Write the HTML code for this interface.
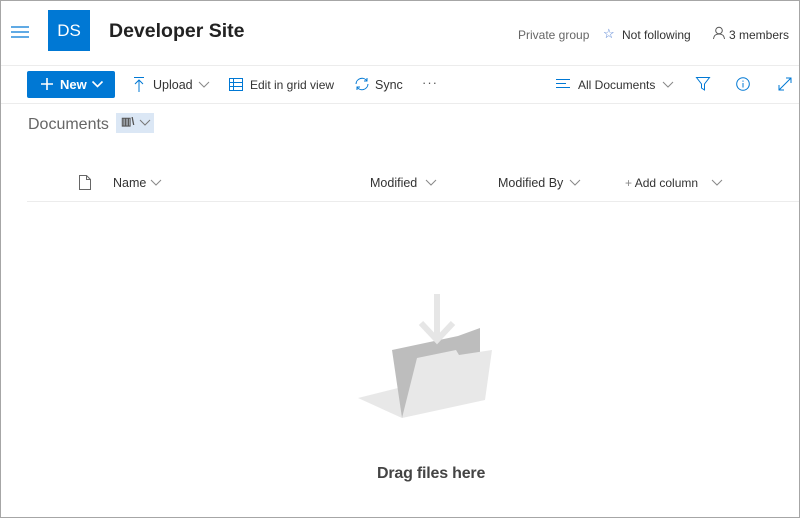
<!DOCTYPE html>
<html><head><meta charset="utf-8"><style>
*{margin:0;padding:0;box-sizing:border-box}
body{width:800px;height:518px;overflow:hidden;background:#fff;font-family:"Liberation Sans",sans-serif;position:relative;color:#333}
.frame{position:absolute;left:0;top:0;width:800px;height:518px;border:1px solid #a6a6a6;pointer-events:none}
.a{position:absolute;white-space:nowrap}
.hl{position:absolute;height:1px;background:#ececec}
svg{position:absolute;overflow:visible}
</style></head><body>
<svg style="left:11px;top:26px" width="20" height="12"><path d="M0 1H18M0 6H18M0 11H18" stroke="#0078d4" stroke-width="1.3" fill="none"/></svg>
<div class="a" style="left:48px;top:10px;width:42px;height:41px;background:#0078d4;color:#fff;font-size:17px;line-height:41px;text-align:center">DS</div>
<div class="a" style="left:109px;top:20px;font-size:19.5px;font-weight:bold;color:#222">Developer Site</div>
<div class="a" style="left:518px;top:28px;font-size:12px;color:#666">Private group</div>
<div class="a" style="left:603px;top:26px;font-size:13px;color:#4a7ad0">☆</div>
<div class="a" style="left:622px;top:28px;font-size:12px;color:#333">Not following</div>
<svg style="left:713px;top:27px" width="12" height="12"><circle cx="6" cy="3.5" r="3.3" stroke="#555" fill="none"/><path d="M0.5 12C1 8 3 7 6 7S11 8 11.5 12" stroke="#555" fill="none"/></svg>
<div class="a" style="left:729px;top:28px;font-size:12px;color:#333">3 members</div>
<div class="hl" style="left:1px;right:1px;top:65px"></div>
<div class="a" style="left:27px;top:71px;width:88px;height:27px;background:#0078d4;border-radius:2px"></div>
<svg style="left:41px;top:78px" width="12" height="12"><path d="M6 0V12M0 6H12" stroke="#fff" stroke-width="1.6"/></svg>
<div class="a" style="left:60px;top:77px;font-size:13px;font-weight:bold;color:#fff">New</div>
<svg style="left:92px;top:81px" width="11" height="7"><path d="M0.5 0.5L5.5 5.5L10.5 0.5" stroke="#fff" stroke-width="1.6" fill="none"/></svg>
<svg style="left:134px;top:77px" width="10" height="15"><path d="M0 0.5H10M5 3V15M1 7L5 3L9 7" stroke="#0078d4" fill="none"/></svg>
<div class="a" style="left:153px;top:78px;font-size:12.5px;color:#333">Upload</div>
<svg style="left:199px;top:82px" width="10" height="6"><path d="M0 0L5 5L10 0" stroke="#888" fill="none"/></svg>
<svg style="left:229px;top:78px" width="14" height="13"><rect x="0.5" y="0.5" width="13" height="12" stroke="#0078d4" fill="none"/><path d="M0 4.5H14M0 8.5H14M4.5 0V13" stroke="#0078d4"/></svg>
<div class="a" style="left:250px;top:78px;font-size:12px;color:#333">Edit in grid view</div>
<svg style="left:354px;top:77px" width="16" height="14"><path d="M2 7A6 6 0 0 1 13 4M14 7A6 6 0 0 1 3 10" stroke="#0078d4" fill="none"/><path d="M13 1V4H10M3 13V10H6" stroke="#0078d4" fill="none"/></svg>
<div class="a" style="left:375px;top:78px;font-size:12.5px;color:#333">Sync</div>
<div class="a" style="left:422px;top:75px;font-size:13px;color:#555;letter-spacing:1px">···</div>
<svg style="left:556px;top:79px" width="14" height="10"><path d="M0 0.5H14M0 4.5H10M0 8.5H14" stroke="#0078d4"/></svg>
<div class="a" style="left:578px;top:78px;font-size:12px;color:#333">All Documents</div>
<svg style="left:663px;top:82px" width="10" height="6"><path d="M0 0L5 5L10 0" stroke="#888" fill="none"/></svg>
<svg style="left:696px;top:77px" width="14" height="14"><path d="M0.5 0.5H13.5L8.5 7V13L5.5 11V7Z" stroke="#0078d4" fill="none"/></svg>
<svg style="left:736px;top:77px" width="14" height="14"><circle cx="7" cy="7" r="6.3" stroke="#0078d4" fill="none"/><path d="M7 6V10.5M7 3.5V4.8" stroke="#0078d4"/></svg>
<svg style="left:778px;top:77px" width="14" height="14"><path d="M1 13L13 1M1 8V13H6M8 1H13V6" stroke="#0078d4" fill="none"/></svg>
<div class="hl" style="left:1px;right:1px;top:103px"></div>
<div class="a" style="left:28px;top:116px;font-size:16px;color:#666">Documents</div>
<div class="a" style="left:116px;top:113px;width:38px;height:20px;background:#dbe7f5"></div>
<div class="a" style="left:121px;top:115px;font-size:11px;color:#555;font-weight:bold">▥\</div>
<svg style="left:140px;top:120px" width="10" height="6"><path d="M0 0L5 5L10 0" stroke="#777" fill="none"/></svg>
<svg style="left:79px;top:175px" width="12" height="15"><path d="M0.5 0.5H7.5L11.5 4.5V14.5H0.5Z M7.5 0.5V4.5H11.5" stroke="#666" fill="none"/></svg>
<div class="a" style="left:113px;top:176px;font-size:12.5px;color:#333">Name</div>
<svg style="left:151px;top:180px" width="10" height="6"><path d="M0 0L5 5L10 0" stroke="#888" fill="none"/></svg>
<div class="a" style="left:370px;top:176px;font-size:12.5px;color:#333">Modified</div>
<svg style="left:426px;top:180px" width="10" height="6"><path d="M0 0L5 5L10 0" stroke="#888" fill="none"/></svg>
<div class="a" style="left:498px;top:176px;font-size:12.5px;color:#333">Modified By</div>
<svg style="left:570px;top:180px" width="10" height="6"><path d="M0 0L5 5L10 0" stroke="#888" fill="none"/></svg>
<div class="a" style="left:625px;top:176px;font-size:12px;color:#333"><span style="color:#888">+</span> Add column</div>
<svg style="left:712px;top:180px" width="10" height="6"><path d="M0 0L5 5L10 0" stroke="#888" fill="none"/></svg>
<div class="hl" style="left:27px;right:1px;top:201px"></div>
<svg style="left:0;top:0" width="800" height="518">
<polygon points="358,398 398,388 402,418" fill="#e8e8e8"/>
<polygon points="392,350 458,336 480,328 480,352 402,418" fill="#bdbdbd"/>
<polygon points="417,358 456,350 459,355 492,350 485,400 402,418" fill="#e8e8e8"/>
<path d="M437,294V340M421,323L437,340L453,323" stroke="#e6e6e6" stroke-width="6" fill="none"/>
</svg>
<div class="a" style="left:377px;top:465px;font-size:16px;font-weight:bold;color:#444;letter-spacing:-0.2px">Drag files here</div>
<div class="frame"></div>
</body></html>
